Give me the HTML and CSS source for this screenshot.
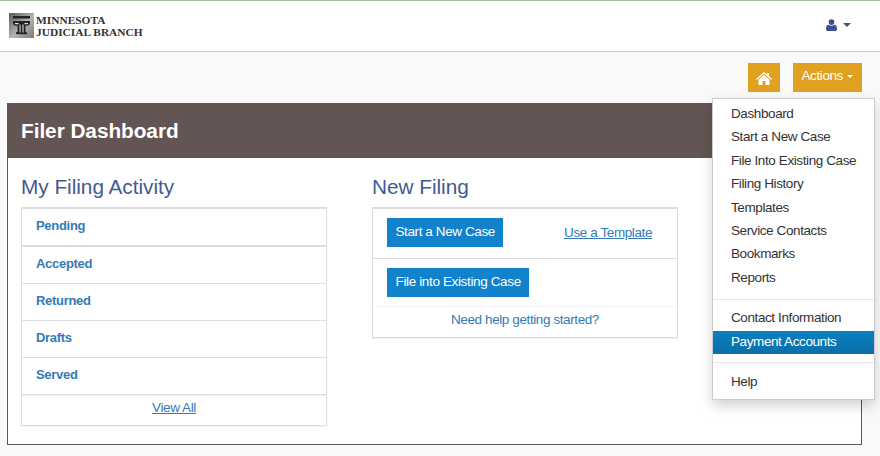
FILE: index.html
```html
<!DOCTYPE html>
<html lang="en">
<head>
<meta charset="utf-8">
<title>Filer Dashboard</title>
<link rel="stylesheet" href="styles.css">
</head>
<body>
<header class="topbar">
  <div class="brand">
    <svg class="brand-mark" viewBox="0 0 25 25" aria-hidden="true">
      <defs><linearGradient id="bg" x1="0" y1="0" x2="1" y2="1"><stop offset="0" stop-color="#5a5a5a"/><stop offset=".55" stop-color="#b5b5b5"/><stop offset="1" stop-color="#777"/></linearGradient></defs>
      <rect width="25" height="25" fill="url(#bg)"/>
      <path d="M4 3h17v2.500H4z" fill="#222"/>
      <path d="M4 8h17v1.800c0 2-1.200 3-3 3-.6 0-1.200-.2-1.500-.6V19h1.300v2.200H7.200V19h1.300v-6.800c-.3.4-.9.600-1.500.600-1.800 0-3-1-3-3z" fill="#222"/>
      <path d="M6 10h3.500v1.200H6zM15.500 10H19v1.200h-3.500zM10.500 11.500h1v8h-1zM13.500 11.500h1v8h-1z" fill="#e4e4e4"/>
    </svg>
    <div class="brand-name">MINNESOTA<br>JUDICIAL BRANCH</div>
  </div>
  <div class="user">
    <svg class="user-icon" viewBox="0 0 12 13" aria-hidden="true"><circle cx="6" cy="3.300" r="3.100"/><path d="M0 11c0-3 1-4.800 2.800-4.800.9.700 2 1.100 3.200 1.100s2.300-.4 3.200-1.100C11 6.200 12 8 12 11c0 1.300-.8 2-2 2H2c-1.200 0-2-.7-2-2z"/></svg>
    <span class="user-caret"></span>
  </div>
</header>
<div class="page">
  <div class="toolbar">
    <a class="btn-gold btn-home">
      <svg class="home-icon" viewBox="0 0 16 13" aria-hidden="true"><path d="M8 0l3 2.600V1h2v3.300L16 7l-.8.900L8 1.800.8 7.900 0 7zM8 3l5.500 4.700V13H9.500V9h-3v4H2.500V7.700z"/></svg>
    </a>
    <a class="btn-gold btn-actions">Actions <span class="caret"></span></a>
  </div>
  <section class="panel">
    <h1 class="panel-title">Filer Dashboard</h1>
    <div class="panel-body">
      <div class="col col-left">
        <h2 class="col-title">My Filing Activity</h2>
        <div class="card">
          <a class="row row-first">Pending</a>
          <a class="row">Accepted</a>
          <a class="row">Returned</a>
          <a class="row">Drafts</a>
          <a class="row">Served</a>
          <div class="card-foot foot-all"><a class="ulink">View All</a></div>
        </div>
      </div>
      <div class="col col-right">
        <h2 class="col-title">New Filing</h2>
        <div class="card">
          <div class="action action-first">
            <a class="btn-blue">Start a New Case</a>
            <a class="ulink tmpl">Use a Template</a>
          </div>
          <div class="action action-second">
            <a class="btn-blue">File into Existing Case</a>
          </div>
          <div class="card-foot foot-help"><a class="plain">Need help getting started?</a></div>
        </div>
      </div>
    </div>
  </section>
</div>
<nav class="menu">
  <a>Dashboard</a>
  <a>Start a New Case</a>
  <a>File Into Existing Case</a>
  <a>Filing History</a>
  <a>Templates</a>
  <a>Service Contacts</a>
  <a>Bookmarks</a>
  <a>Reports</a>
  <hr class="sep-first">
  <a class="lower">Contact Information</a>
  <a class="lower active">Payment Accounts</a>
  <hr class="sep-second">
  <a class="lower">Help</a>
</nav>
</body>
</html>
```
FILE: styles.css
```css
* { box-sizing: border-box; }
html, body { margin: 0; height: 456px; overflow: hidden; }
body { background: #f9f9f9; font-family: "Liberation Sans", Arial, sans-serif; font-size: 13.500px; letter-spacing: -.4px; color: #333; position: relative; }
a { display: block; }

.topbar { height: 52px; background: #fff; border-top: 1px solid #a3bd9f; border-bottom: 1px solid #ccc; display: flex; align-items: center; justify-content: space-between; padding: 0 29px 3px 9px; }
.brand { display: flex; align-items: center; gap: 2px; padding-top: 2px; }
.brand-mark { width: 25px; height: 25px; display: block; }
.brand-name { font-family: "Liberation Serif", serif; font-weight: 700; font-size: 11.400px; line-height: 12px; letter-spacing: 0; color: #333; }
.user { display: flex; align-items: center; gap: 6px; }
.user-icon { width: 11px; height: 12px; fill: #3f4f8f; display: block; }
.user-caret { width: 0; height: 0; border-left: 4px solid transparent; border-right: 4px solid transparent; border-top: 4px solid #3f4f8f; }

.page { padding: 11px 18px 0 7px; }
.toolbar { display: flex; justify-content: flex-end; gap: 13px; height: 29px; margin-bottom: 11px; }
.btn-gold { background: #e0a020; color: #fff; height: 29px; }
.btn-home { width: 32px; display: flex; align-items: center; justify-content: center; }
.home-icon { width: 16px; height: 13px; fill: #fff; display: block; margin-top: 1px; }
.btn-actions { width: 69px; padding: 5px 0 0 8.500px; line-height: 16px; }
.caret { display: inline-block; vertical-align: middle; width: 0; height: 0; border-left: 3px solid transparent; border-right: 3px solid transparent; border-top: 3px solid #fff; margin-left: 1px; }

.panel { height: 342px; background: #fff; border: 1px solid #625553; }
.panel-title { margin: -1px -1px 0; height: 55px; background: #625553; color: #fff; font-size: 20.800px; line-height: 55px; font-weight: 700; letter-spacing: -.05px; padding-left: 14px; }
.panel-body { display: flex; padding: 0 13px; }
.col { width: 306px; }
.col-right { margin-left: 45px; }
.col-title { margin: 0; height: 49px; padding-top: 17px; font-size: 20.800px; font-weight: 400; line-height: 24px; letter-spacing: -.03px; color: #3f5a94; }
.card { border: 1px solid #ddd; border-top-width: 2px; box-shadow: 0 1px 1px rgba(0,0,0,.05); background: #fff; }
.row { height: 37px; border-bottom: 1px solid #ddd; padding: 8px 14px 0; font-weight: 700; font-size: 13px; line-height: 17px; color: #337ab7; letter-spacing: -.3px; }
.row-first { height: 38px; border-bottom-width: 2px; }
.card-foot { text-align: center; border-top: 1px solid #f2f2f2; background: #fff; line-height: 17px; }
.foot-all { height: 30px; padding-top: 3px; }
.foot-help { height: 31px; padding-top: 4px; }
.ulink { display: inline-block; color: #337ab7; text-decoration: underline; }
.plain { display: inline-block; color: #337ab7; }
.action { border-bottom: 1px solid #ddd; padding: 9px 14px; display: flex; align-items: flex-start; }
.action-first { height: 50px; }
.action-second { height: 47px; border-bottom: 0; }
.action-second .btn-blue { letter-spacing: -.36px; }
.btn-blue { background: #1282cc; color: #fff; height: 29px; padding: 5px 8.500px 0; line-height: 17px; }
.tmpl { margin-left: auto; margin-top: 7px; margin-right: 11px; }

.menu { position: absolute; left: 712px; top: 98px; width: 163px; height: 302px; background: #fff; border: 1px solid #ccc; box-shadow: 0 6px 12px rgba(0,0,0,.175); padding: 3px 0; }
.menu a { height: 23.400px; padding: 3px 18px 0; line-height: 17px; color: #333; white-space: nowrap; }
.menu a.lower { padding-top: 2px; }
.sep-first, .sep-second { border: 0; border-top: 1px solid #e5e5e5; }
.sep-first { margin: 10px 0 7px; }
.sep-second { margin: 8px 0 8px; }
.menu a.active { background: linear-gradient(#0a80c0, #0a6fa8); color: #fff; }
```
